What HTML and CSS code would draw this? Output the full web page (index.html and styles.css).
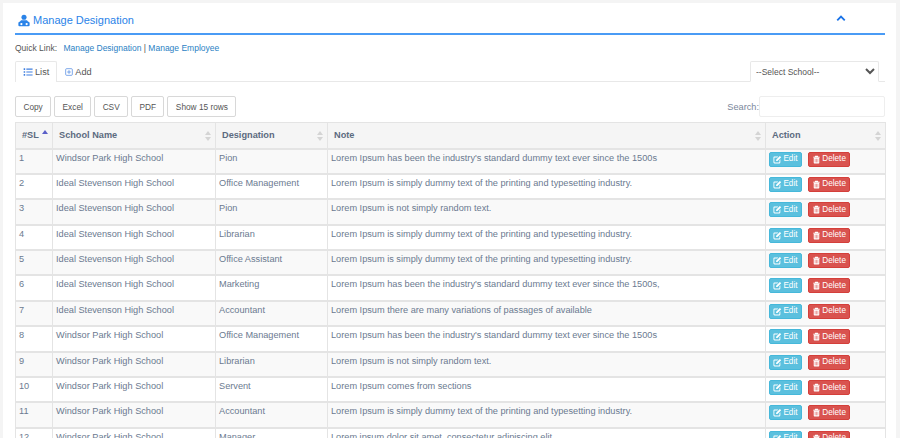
FILE: index.html
```html
<!DOCTYPE html>
<html lang="en">

<head>
    <meta charset="UTF-8">
    <title>Manage Designation</title>
    <link rel="stylesheet" href="styles.css">
</head>

<body>
    <svg class="icon-defs" width="0" height="0">
        <symbol id="i-edit" viewBox="0 0 12 12">
            <path d="M1.8 2H7L5.8 3.2H2.4a.6.6 0 0 0-.6.6v5.6c0 .3.3.6.6.6H8a.6.6 0 0 0 .6-.6V6.8L9.8 5.6v4.2A1.6 1.6 0 0 1 8.2 11.4H2A1.6 1.6 0 0 1 .6 9.8V3.4A1.4 1.4 0 0 1 1.8 2z" fill="currentColor"/>
            <path d="M4.2 6.4 9.2 1.4l1.7 1.7-5 5H4.2z" fill="currentColor"/>
        </symbol>
        <symbol id="i-trash" viewBox="0 0 12 12">
            <path d="M4.2 1h3.6l.6 1.2H10.500v1H1.500v-1H3.600zM2.300 3.800h7.400v6.400A1 1 0 0 1 8.700 11.200H3.300a1 1 0 0 1-1-1z" fill="currentColor"/>
            <path d="M4.200 5v4.800M6 5v4.800M7.800 5v4.800" stroke="#d9534f" stroke-width=".7"/>
        </symbol>
    </svg>

    <div class="card">
        <div class="card-head">
            <h2 class="card-title">
                <svg class="title-icon" viewBox="0 0 16 16">
                    <circle cx="8" cy="3.600" r="3.400" fill="#2a83e8"/>
                    <path d="M5 7.800h6c1.200 0 2 .8 2.300 1.800h.4c1 0 1.800.8 1.800 1.800v2.800a1.500 1.500 0 0 1-1.500 1.500H2a1.500 1.500 0 0 1-1.500-1.500v-2.800c0-1 .8-1.800 1.800-1.800h.4C3 8.600 3.800 7.800 5 7.800z" fill="#2a83e8"/>
                    <circle cx="4.500" cy="12.800" r="1.500" fill="#fff"/>
                    <circle cx="11.500" cy="12.800" r="1.500" fill="#fff"/>
                </svg>
                Manage Designation
            </h2>
            <svg class="collapse-icon" viewBox="0 0 12 8">
                <path d="M1.500 6.300 6 1.800l4.500 4.500" fill="none" stroke="currentColor" stroke-width="2.200"/>
            </svg>
        </div>

        <p class="quick-links">
            <span class="quick-label">Quick Link:</span>
            <a href="#">Manage Designation</a> | <a href="#">Manage Employee</a>
        </p>

        <div class="tabs">
            <a href="#" class="tab active">
                <svg class="tab-icon" viewBox="0 0 12 12">
                    <path d="M4 2.500h7.500M4 6h7.500M4 9.500h7.500" stroke="currentColor" stroke-width="1.300"/>
                    <path d="M.8 2.500h1.800M.8 6h1.800M.8 9.500h1.800" stroke="currentColor" stroke-width="2"/>
                </svg>
                List
            </a>
            <a href="#" class="tab">
                <svg class="tab-icon tab-icon-add" viewBox="0 0 12 12">
                    <rect x="1" y="1" width="10" height="10" rx="1.500" fill="none" stroke="currentColor"/>
                    <path d="M6 3.200v5.600M3.200 6h5.600" stroke="currentColor"/>
                </svg>
                Add
            </a>
            <select class="school-select">
                <option>--Select School--</option>
            </select>
        </div>

        <div class="toolbar">
            <div class="export-buttons">
                <button>Copy</button>
                <button>Excel</button>
                <button>CSV</button>
                <button>PDF</button>
                <button>Show 15 rows</button>
            </div>
            <label class="search">Search:<input type="text"></label>
        </div>

        <table class="data-table">
            <colgroup>
                <col class="col-sl">
                <col class="col-school">
                <col class="col-desig">
                <col class="col-note">
                <col class="col-action">
            </colgroup>
            <thead>
                <tr>
                    <th class="sort-asc">#SL</th>
                    <th>School Name</th>
                    <th>Designation</th>
                    <th>Note</th>
                    <th>Action</th>
                </tr>
            </thead>
            <tbody>
                <tr>
                    <td>1</td>
                    <td>Windsor Park High School</td>
                    <td>Pion</td>
                    <td>Lorem Ipsum has been the industry's standard dummy text ever since the 1500s</td>
                    <td><a href="#" class="btn btn-edit"><svg><use href="#i-edit"/></svg>Edit</a><a href="#" class="btn btn-delete"><svg><use href="#i-trash"/></svg>Delete</a></td>
                </tr>
                <tr>
                    <td>2</td>
                    <td>Ideal Stevenson High School</td>
                    <td>Office Management</td>
                    <td>Lorem Ipsum is simply dummy text of the printing and typesetting industry.</td>
                    <td><a href="#" class="btn btn-edit"><svg><use href="#i-edit"/></svg>Edit</a><a href="#" class="btn btn-delete"><svg><use href="#i-trash"/></svg>Delete</a></td>
                </tr>
                <tr>
                    <td>3</td>
                    <td>Ideal Stevenson High School</td>
                    <td>Pion</td>
                    <td>Lorem Ipsum is not simply random text.</td>
                    <td><a href="#" class="btn btn-edit"><svg><use href="#i-edit"/></svg>Edit</a><a href="#" class="btn btn-delete"><svg><use href="#i-trash"/></svg>Delete</a></td>
                </tr>
                <tr>
                    <td>4</td>
                    <td>Ideal Stevenson High School</td>
                    <td>Librarian</td>
                    <td>Lorem Ipsum is simply dummy text of the printing and typesetting industry.</td>
                    <td><a href="#" class="btn btn-edit"><svg><use href="#i-edit"/></svg>Edit</a><a href="#" class="btn btn-delete"><svg><use href="#i-trash"/></svg>Delete</a></td>
                </tr>
                <tr>
                    <td>5</td>
                    <td>Ideal Stevenson High School</td>
                    <td>Office Assistant</td>
                    <td>Lorem Ipsum is simply dummy text of the printing and typesetting industry.</td>
                    <td><a href="#" class="btn btn-edit"><svg><use href="#i-edit"/></svg>Edit</a><a href="#" class="btn btn-delete"><svg><use href="#i-trash"/></svg>Delete</a></td>
                </tr>
                <tr>
                    <td>6</td>
                    <td>Ideal Stevenson High School</td>
                    <td>Marketing</td>
                    <td>Lorem Ipsum has been the industry's standard dummy text ever since the 1500s,</td>
                    <td><a href="#" class="btn btn-edit"><svg><use href="#i-edit"/></svg>Edit</a><a href="#" class="btn btn-delete"><svg><use href="#i-trash"/></svg>Delete</a></td>
                </tr>
                <tr>
                    <td>7</td>
                    <td>Ideal Stevenson High School</td>
                    <td>Accountant</td>
                    <td>Lorem Ipsum there are many variations of passages of available</td>
                    <td><a href="#" class="btn btn-edit"><svg><use href="#i-edit"/></svg>Edit</a><a href="#" class="btn btn-delete"><svg><use href="#i-trash"/></svg>Delete</a></td>
                </tr>
                <tr>
                    <td>8</td>
                    <td>Windsor Park High School</td>
                    <td>Office Management</td>
                    <td>Lorem Ipsum has been the industry's standard dummy text ever since the 1500s</td>
                    <td><a href="#" class="btn btn-edit"><svg><use href="#i-edit"/></svg>Edit</a><a href="#" class="btn btn-delete"><svg><use href="#i-trash"/></svg>Delete</a></td>
                </tr>
                <tr>
                    <td>9</td>
                    <td>Windsor Park High School</td>
                    <td>Librarian</td>
                    <td>Lorem Ipsum is not simply random text.</td>
                    <td><a href="#" class="btn btn-edit"><svg><use href="#i-edit"/></svg>Edit</a><a href="#" class="btn btn-delete"><svg><use href="#i-trash"/></svg>Delete</a></td>
                </tr>
                <tr>
                    <td>10</td>
                    <td>Windsor Park High School</td>
                    <td>Servent</td>
                    <td>Lorem Ipsum comes from sections</td>
                    <td><a href="#" class="btn btn-edit"><svg><use href="#i-edit"/></svg>Edit</a><a href="#" class="btn btn-delete"><svg><use href="#i-trash"/></svg>Delete</a></td>
                </tr>
                <tr>
                    <td>11</td>
                    <td>Windsor Park High School</td>
                    <td>Accountant</td>
                    <td>Lorem Ipsum is simply dummy text of the printing and typesetting industry.</td>
                    <td><a href="#" class="btn btn-edit"><svg><use href="#i-edit"/></svg>Edit</a><a href="#" class="btn btn-delete"><svg><use href="#i-trash"/></svg>Delete</a></td>
                </tr>
                <tr>
                    <td>12</td>
                    <td>Windsor Park High School</td>
                    <td>Manager</td>
                    <td>Lorem ipsum dolor sit amet, consectetur adipiscing elit.</td>
                    <td><a href="#" class="btn btn-edit"><svg><use href="#i-edit"/></svg>Edit</a><a href="#" class="btn btn-delete"><svg><use href="#i-trash"/></svg>Delete</a></td>
                </tr>
            </tbody>
        </table>
    </div>
</body>

</html>
```
FILE: styles.css
```css
* {
    margin: 0;
    padding: 0;
    box-sizing: border-box;
}

html,
body {
    height: 100%;
    overflow: hidden;
}

body {
    font-family: "Liberation Sans", Arial, sans-serif;
    font-size: 9.200px;
    background-color: #f4f4f4;
    color: #333;
    padding: 3px 4px 0 3px;
}

.icon-defs {
    position: absolute;
}

/* CARD */
.card {
    background-color: #fff;
    padding: 0 11px 0 12px;
    min-height: 600px;
}

.card-head {
    display: flex;
    justify-content: space-between;
    align-items: center;
    height: 32px;
    border-bottom: 2px solid #4a9bf5;
    padding: 4px 39px 0 3px;
}

.card-title {
    display: flex;
    align-items: center;
    gap: 3px;
    font-size: 11px;
    font-weight: 400;
    color: #2a83e8;
}

.title-icon {
    width: 12px;
    height: 13px;
}

.collapse-icon {
    width: 10px;
    height: 7px;
    color: #1a73e8;
    margin-bottom: 4px;
}

.quick-links {
    margin-top: 7px;
    height: 12px;
    line-height: 12px;
    font-size: 8.500px;
    color: #555;
}

.quick-label {
    margin-right: 4px;
}

.quick-links a {
    color: #2a7fc4;
    text-decoration: none;
}

/* TABS */
.tabs {
    display: flex;
    align-items: flex-end;
    height: 21px;
    margin-top: 7px;
    border-bottom: 1px solid #e8e8e8;
}

.tab {
    display: flex;
    align-items: center;
    gap: 2px;
    height: 21px;
    margin-bottom: -1px;
    padding: 0 7px;
    color: #555;
    text-decoration: none;
    border: 1px solid transparent;
    border-bottom: none;
}

.tab.active {
    background-color: #fff;
    border-color: #e8e8e8;
    border-radius: 2px 2px 0 0;
}

.tab-icon {
    width: 10px;
    height: 10px;
    color: #3f7fe0;
}

.tab-icon-add {
    width: 8px;
    height: 8px;
}

.school-select {
    margin-left: auto;
    margin-right: 6px;
    margin-bottom: -1px;
    width: 129px;
    height: 21px;
    padding-left: 1px;
    font-family: inherit;
    font-size: 8.500px;
    color: #555;
    background-color: #fff;
    border: 1px solid #e8e8e8;
    border-bottom: 1px solid #fff;
    border-radius: 2px 2px 0 0;
}

/* TOOLBAR */
.toolbar {
    display: flex;
    justify-content: space-between;
    align-items: center;
    margin-top: 14px;
    height: 21px;
}

.export-buttons {
    display: flex;
    gap: 3px;
}

.export-buttons button {
    height: 21px;
    padding: 0 7.400px;
    font-family: inherit;
    font-size: 8.300px;
    color: #555;
    background-color: #fff;
    border: 1px solid #d8d8d8;
    border-radius: 2px;
}

.search {
    display: flex;
    align-items: center;
    color: #7a869a;
}

.search input {
    width: 126px;
    height: 21px;
    border: 1px solid #eee;
    border-radius: 2px;
}

/* TABLE */
.data-table {
    width: 870px;
    margin-top: 5px;
    border-collapse: collapse;
    table-layout: fixed;
    color: #6b7a90;
}

.col-sl { width: 37px; }
.col-school { width: 163px; }
.col-desig { width: 112px; }
.col-note { width: 438px; }
.col-action { width: 120px; }

.data-table th {
    position: relative;
    height: 26px;
    padding: 0 6px;
    text-align: left;
    font-size: 9.200px;
    color: #5c6b80;
    background-color: #f5f5f5;
    border: 1px solid #e4e4e4;
    border-bottom-width: 2px;
}

/* sort arrows */
.data-table th::before,
.data-table th::after {
    content: "";
    position: absolute;
    right: 4px;
    border-left: 3px solid transparent;
    border-right: 3px solid transparent;
}

.data-table th::before {
    top: 8px;
    border-bottom: 4px solid #d4d4d4;
}

.data-table th::after {
    top: 14px;
    border-top: 4px solid #d4d4d4;
}

.data-table th.sort-asc::before {
    top: 7px;
    border-bottom-color: #5a5fc8;
}

.data-table th.sort-asc::after {
    display: none;
}

.data-table td {
    height: 25.400px;
    padding: 2px 3px 5px;
    vertical-align: top;
    line-height: 12px;
    border: 1px solid #e4e4e4;
    border-bottom-width: 2px;
}

.data-table td:last-child {
    padding-top: 2px;
    padding-bottom: 0;
}

.data-table tbody tr:nth-child(odd) {
    background-color: #f9f9f9;
}

.btn {
    display: inline-flex;
    align-items: center;
    gap: 1px;
    height: 15px;
    padding: 0 3.400px;
    font-size: 8.200px;
    vertical-align: top;
    color: #fff;
    text-decoration: none;
    border-radius: 2px;
}

.btn svg {
    width: 9px;
    height: 9px;
}

.btn-edit {
    background-color: #5bc0de;
    border: 1px solid #46b8da;
    margin-right: 6px;
}

.btn-delete {
    background-color: #d9534f;
    border: 1px solid #d43f3a;
}
```
